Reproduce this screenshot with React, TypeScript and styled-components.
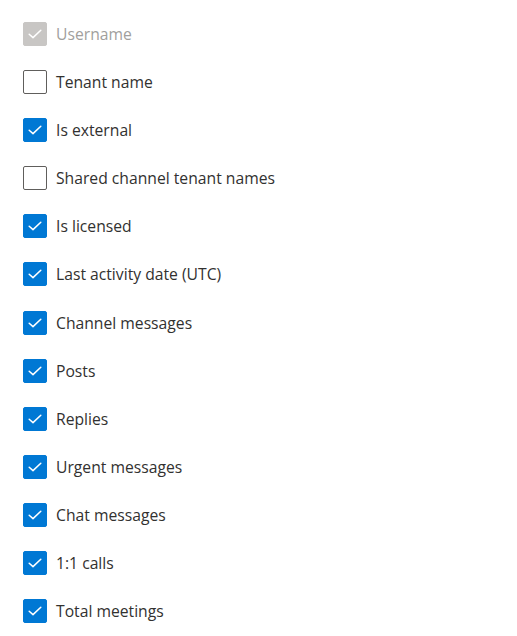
import styled, { createGlobalStyle } from "styled-components";

const GlobalStyle = createGlobalStyle`
  body {
    margin: 0;
    background: #ffffff;
    font-family: "Open Sans", "Noto Sans", sans-serif;
  }
`;

const ColumnList = styled.div`
  display: flex;
  flex-direction: column;
  gap: 24.1px;
  padding: 22px 0 0 23px;
`;

const Row = styled.label`
  display: flex;
  align-items: center;
  height: 24px;
  gap: 9px;
`;

const Box = styled.span<{ $checked: boolean; $disabled?: boolean }>`
  width: 24px;
  height: 24px;
  box-sizing: border-box;
  border-radius: 2px;
  display: flex;
  align-items: center;
  justify-content: center;
  flex-shrink: 0;
  background: ${(p) =>
    p.$disabled ? "#c8c6c4" : p.$checked ? "#0078d4" : "#ffffff"};
  border: 1px solid
    ${(p) => (p.$disabled ? "#c8c6c4" : p.$checked ? "#0078d4" : "#605e5c")};
`;

const Label = styled.span<{ $disabled?: boolean }>`
  font-size: 15.7px;
  color: ${(p) => (p.$disabled ? "#a19f9d" : "#323130")};
  white-space: nowrap;
`;

const columns = [
  { name: "Username", checked: true, disabled: true },
  { name: "Tenant name", checked: false },
  { name: "Is external", checked: true },
  { name: "Shared channel tenant names", checked: false },
  { name: "Is licensed", checked: true },
  { name: "Last activity date (UTC)", checked: true },
  { name: "Channel messages", checked: true },
  { name: "Posts", checked: true },
  { name: "Replies", checked: true },
  { name: "Urgent messages", checked: true },
  { name: "Chat messages", checked: true },
  { name: "1:1 calls", checked: true },
  { name: "Total meetings", checked: true },
];

function CheckMark() {
  return (
    <svg width="14" height="10" viewBox="0 0 14 10">
      <path
        d="M1.2 5.2 L5 8.6 L12.8 1.2"
        fill="none"
        stroke="#ffffff"
        strokeWidth="1.5"
        strokeLinecap="round"
        strokeLinejoin="round"
      />
    </svg>
  );
}

export default function App() {
  return (
    <>
      <GlobalStyle />
      <ColumnList>
        {columns.map((col) => (
          <Row key={col.name}>
            <Box $checked={col.checked} $disabled={col.disabled}>
              {col.checked && <CheckMark />}
            </Box>
            <Label $disabled={col.disabled}>{col.name}</Label>
          </Row>
        ))}
      </ColumnList>
    </>
  );
}
